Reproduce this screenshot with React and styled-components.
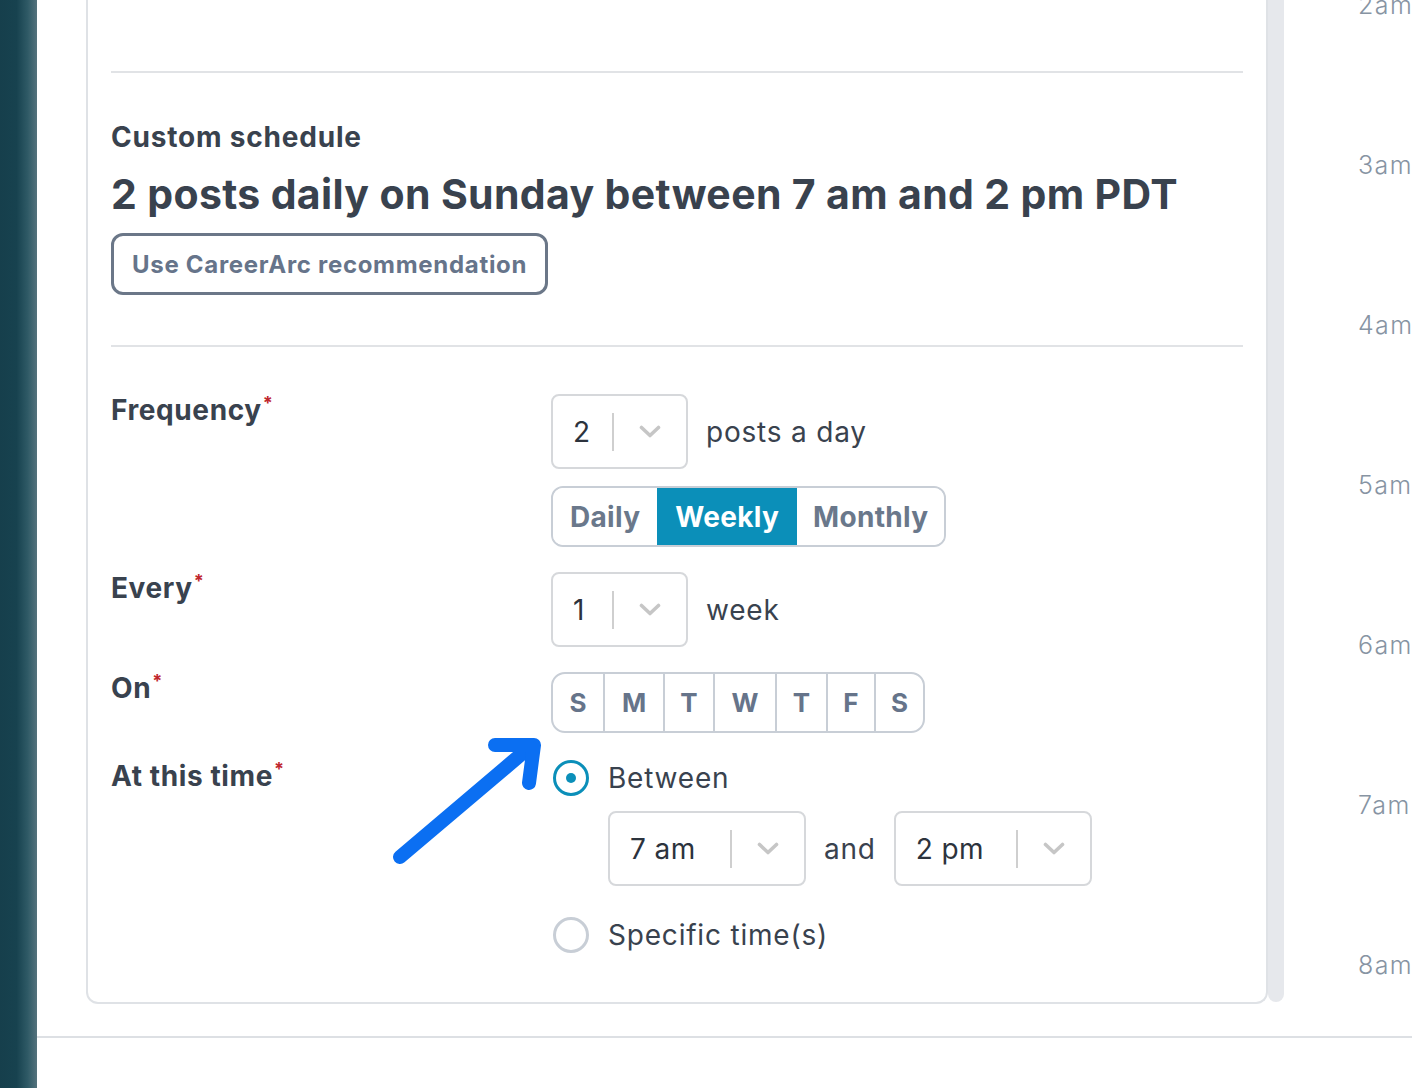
import React from "react";
import styled, { createGlobalStyle } from "styled-components";

const GlobalStyle = createGlobalStyle`
  html, body { margin: 0; padding: 0; background: #ffffff; }
  body { font-family: Inter, "Open Sans", sans-serif; color: #39424e; }
  #root { height: 100vh; }
  * { box-sizing: border-box; }
`;

const Page = styled.div`
  display: flex;
  height: 100vh;
  overflow: hidden;
  background: #fff;
`;

const Sidebar = styled.div`
  width: 37px;
  flex: none;
  background: linear-gradient(to right, #163f4c 0%, #17424f 45%, #2f5a66 75%, #55737d 100%);
`;

const Main = styled.div`
  flex: 1;
  display: flex;
  flex-direction: column;
  min-width: 0;
`;

const Top = styled.div`
  height: 1036px;
  display: flex;
  align-items: flex-start;
  overflow: hidden;
`;

const CardColumn = styled.div`
  padding-left: 49px;
  flex: none;
`;

const Card = styled.div`
  position: relative;
  width: 1182px;
  border: 2px solid #dfe2e6;
  border-top: none;
  border-radius: 0 0 12px 12px;
  padding: 71px 23px 49px 23px;
`;

const Rule = styled.div`
  height: 2px;
  background: #e1e3e6;
`;

const Summary = styled.div`
  padding: 48px 0 50px;
  display: flex;
  flex-direction: column;
  align-items: flex-start;
`;

const Eyebrow = styled.div`
  font-size: 28px;
  line-height: 32px;
  font-weight: 700;
  letter-spacing: 0.8px;
  color: #39424e;
`;

const Headline = styled.div`
  margin-top: 17px;
  font-size: 41px;
  line-height: 48px;
  font-weight: 700;
  color: #39424e;
  letter-spacing: 0.35px;
`;

const OutlineButton = styled.button`
  margin-top: 15px;
  height: 62px;
  padding: 0 18px;
  border: 3px solid #6b7788;
  border-radius: 12px;
  background: #fff;
  font-family: inherit;
  font-size: 24px;
  font-weight: 700;
  letter-spacing: 0.7px;
  color: #66748a;
  cursor: pointer;
`;

const Form = styled.div`
  margin-top: 47px;
  display: grid;
  grid-template-columns: 440px 1fr;
  row-gap: 25px;
`;

const Label = styled.div`
  font-size: 28px;
  line-height: 32px;
  font-weight: 700;
  letter-spacing: 0.6px;
  color: #39424e;
  align-self: start;
  margin-top: ${(p) => p.$offset || 0}px;
`;

const Req = styled.span`
  color: #c0262d;
  font-size: 18px;
  line-height: 1;
  vertical-align: top;
  margin-left: 1px;
`;

const Controls = styled.div`
  display: flex;
  flex-direction: column;
  align-items: flex-start;
  gap: ${(p) => p.$gap || 0}px;
  margin-top: ${(p) => p.$offset || 0}px;
`;

const InlineRow = styled.div`
  display: flex;
  align-items: center;
  gap: 18px;
`;

const SelectBox = styled.div`
  width: ${(p) => p.$width}px;
  height: 75px;
  border: 2px solid #d6d8db;
  border-radius: 8px;
  display: flex;
  align-items: center;
  background: #fff;
`;

const SelectValue = styled.div`
  flex: 1;
  padding-left: 20px;
  font-size: 28px;
  letter-spacing: 0.4px;
  color: #2c333d;
`;

const SelectSep = styled.div`
  width: 2px;
  height: 38px;
  background: #cfcfcf;
`;

const ChevronBox = styled.div`
  width: 72px;
  display: flex;
  justify-content: center;
  align-items: center;
`;

const InlineText = styled.span`
  font-size: 28px;
  letter-spacing: 0.8px;
  color: #39424e;
`;

const Segmented = styled.div`
  display: flex;
  height: 61px;
  border: 2px solid #c8ced6;
  border-radius: 12px;
  overflow: hidden;
`;

const Segment = styled.div`
  display: flex;
  align-items: center;
  padding: 0 ${(p) => p.$pad || 17}px;
  font-size: 28px;
  font-weight: 700;
  letter-spacing: 0.3px;
  color: ${(p) => (p.$active ? "#ffffff" : "#6a788b")};
  background: ${(p) => (p.$active ? "#0b8fb9" : "#fff")};
`;

const DayGroup = styled.div`
  display: flex;
  height: 61px;
  border: 2px solid #c8ced6;
  border-radius: 14px;
  overflow: hidden;
`;

const Day = styled.div`
  width: ${(p) => p.$w}px;
  display: flex;
  align-items: center;
  justify-content: center;
  font-size: 26px;
  font-weight: 700;
  color: #66748a;
  border-left: ${(p) => (p.$first ? "none" : "2px solid #c8ced6")};
`;

const RadioRow = styled.div`
  display: flex;
  align-items: center;
  gap: 19px;
  margin-left: 2px;
`;

const RadioCircle = styled.div`
  width: 36px;
  height: 36px;
  border-radius: 50%;
  border: 3px solid ${(p) => (p.$checked ? "#0b8fb9" : "#c8ced6")};
  display: flex;
  align-items: center;
  justify-content: center;
  &::after {
    content: "";
    width: 10px;
    height: 10px;
    border-radius: 50%;
    background: ${(p) => (p.$checked ? "#0b8fb9" : "transparent")};
  }
`;

const TimeRange = styled.div`
  margin-left: 57px;
  margin-top: 15px;
  margin-bottom: 31px;
  display: flex;
  align-items: center;
  gap: 18px;
`;

const Arrow = styled.svg`
  position: absolute;
  left: 290px;
  top: 720px;
  width: 180px;
  height: 160px;
  overflow: visible;
  pointer-events: none;
`;

const Scrollbar = styled.div`
  width: 16px;
  height: 1002px;
  flex: none;
  background: #e6e8ec;
  border-radius: 0 0 8px 8px;
`;

const TimeColumn = styled.div`
  flex: 1;
  margin-top: -7px;
  padding-left: 74px;
  display: flex;
  flex-direction: column;
`;

const TimeSlot = styled.div`
  height: 160px;
  flex: none;
  font-size: 25px;
  line-height: 24px;
  font-weight: 300;
  letter-spacing: 1.4px;
  color: #8794a3;
  white-space: nowrap;
`;

const BottomRule = styled.div`
  height: 2px;
  background: #dde0e4;
`;

const Chevron = () => (
  <svg width="22" height="13" viewBox="0 0 22 13">
    <polyline
      points="2.5,2.5 11,10.5 19.5,2.5"
      fill="none"
      stroke="#c6c6c6"
      strokeWidth="3.6"
      strokeLinecap="round"
      strokeLinejoin="round"
    />
  </svg>
);

const Select = ({ width, value }) => (
  <SelectBox $width={width}>
    <SelectValue>{value}</SelectValue>
    <SelectSep />
    <ChevronBox>
      <Chevron />
    </ChevronBox>
  </SelectBox>
);

const days = [
  ["S", 50],
  ["M", 60],
  ["T", 50],
  ["W", 62],
  ["T", 51],
  ["F", 48],
  ["S", 49],
];

const times = ["2am", "3am", "4am", "5am", "6am", "7am", "8am"];

export default function App() {
  return (
    <>
      <GlobalStyle />
      <Page>
        <Sidebar />
        <Main>
          <Top>
            <CardColumn>
              <Card>
                <Rule />
                <Summary>
                  <Eyebrow>Custom schedule</Eyebrow>
                  <Headline>2 posts daily on Sunday between 7 am and 2 pm PDT</Headline>
                  <OutlineButton>Use CareerArc recommendation</OutlineButton>
                </Summary>
                <Rule />
                <Form>
                  <Label>
                    Frequency<Req>*</Req>
                  </Label>
                  <Controls $gap={17}>
                    <InlineRow>
                      <Select width={137} value="2" />
                      <InlineText>posts a day</InlineText>
                    </InlineRow>
                    <Segmented>
                      <Segment $pad={17}>Daily</Segment>
                      <Segment $active $pad={18}>Weekly</Segment>
                      <Segment $pad={16}>Monthly</Segment>
                    </Segmented>
                  </Controls>

                  <Label>
                    Every<Req>*</Req>
                  </Label>
                  <Controls>
                    <InlineRow>
                      <Select width={137} value="1" />
                      <InlineText>week</InlineText>
                    </InlineRow>
                  </Controls>

                  <Label>
                    On<Req>*</Req>
                  </Label>
                  <Controls>
                    <DayGroup>
                      {days.map(([d, w], i) => (
                        <Day key={i} $w={w} $first={i === 0}>
                          {d}
                        </Day>
                      ))}
                    </DayGroup>
                  </Controls>

                  <Label $offset={2}>
                    At this time<Req>*</Req>
                  </Label>
                  <Controls $offset={2}>
                    <RadioRow>
                      <RadioCircle $checked />
                      <InlineText>Between</InlineText>
                    </RadioRow>
                    <TimeRange>
                      <Select width={198} value="7 am" />
                      <InlineText>and</InlineText>
                      <Select width={198} value="2 pm" />
                    </TimeRange>
                    <RadioRow>
                      <RadioCircle />
                      <InlineText>Specific time(s)</InlineText>
                    </RadioRow>
                  </Controls>
                </Form>
                <Arrow viewBox="290 720 180 160">
                  <g
                    fill="none"
                    stroke="#0b6ff2"
                    strokeWidth="14"
                    strokeLinecap="round"
                    strokeLinejoin="round"
                  >
                    <line x1="312" y1="857" x2="443" y2="746" />
                    <polyline points="407,745 446,745 441,783" />
                  </g>
                </Arrow>
              </Card>
            </CardColumn>
            <Scrollbar />
            <TimeColumn>
              {times.map((t) => (
                <TimeSlot key={t}>{t}</TimeSlot>
              ))}
            </TimeColumn>
          </Top>
          <BottomRule />
        </Main>
      </Page>
    </>
  );
}
